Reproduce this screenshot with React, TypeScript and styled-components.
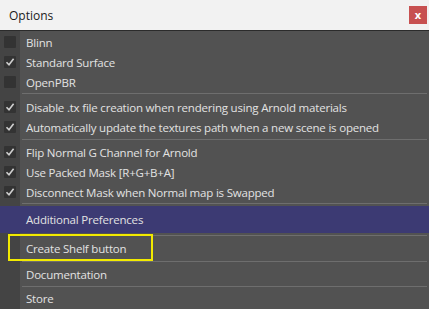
import React from "react";
import styled, { createGlobalStyle } from "styled-components";

const Global = createGlobalStyle`
  html, body { margin: 0; padding: 0; background: #f0f0f0; }
  body { font-family: "Open Sans", "Noto Sans", sans-serif; }
`;

const Window = styled.div`
  width: 429px;
  height: 309px;
  display: flex;
  flex-direction: column;
  position: relative;
  overflow: hidden;
`;

const TitleBar = styled.div`
  height: 30px;
  flex: none;
  background: #f2f2f2;
  display: flex;
  align-items: center;
  justify-content: space-between;
  padding: 0 2px 0 9px;
  box-sizing: border-box;
`;

const Title = styled.span`
  font-size: 12px;
  color: #1b1b1b;
`;

const Close = styled.div`
  width: 18px;
  height: 18px;
  background: #c75050;
  color: #fff;
  font-size: 11px;
  font-weight: 700;
  display: flex;
  align-items: center;
  justify-content: center;
  line-height: 1;
  padding-bottom: 2px;
  box-sizing: border-box;
`;

const Body = styled.div`
  flex: 1;
  border-top: 1px solid #2b2b2b;
  padding-top: 1px;
  background: linear-gradient(to right, #444444 0 20px, #525252 20px);
  display: flex;
  flex-direction: column;
  font-size: 11.5px;
  letter-spacing: -0.2px;
  color: #e2e2e2;
`;

const Row = styled.div<{ $h?: number; $hl?: boolean }>`
  height: ${(p) => p.$h ?? 20}px;
  flex: none;
  display: flex;
  align-items: center;
  background: ${(p) => (p.$hl ? "#3c3a73" : "transparent")};
`;

const Gutter = styled.div`
  width: 20px;
  flex: none;
  display: flex;
  align-items: center;
  justify-content: center;
`;

const Box = styled.div`
  width: 12px;
  height: 12px;
  background: #333333;
  border-radius: 1px;
  display: flex;
  align-items: center;
  justify-content: center;
`;

const Label = styled.span`
  padding-left: 6px;
  white-space: nowrap;
`;

const Sep = styled.div<{ $h: number; $top: number }>`
  height: ${(p) => p.$h}px;
  flex: none;
  position: relative;
  margin-left: 22px;
  margin-right: 2px;
  &::after {
    content: "";
    position: absolute;
    left: 0;
    right: 0;
    top: ${(p) => p.$top}px;
    height: 1px;
    background: #6e6e6e;
  }
`;

const Highlight = styled.div`
  position: absolute;
  left: 8px;
  top: 234px;
  width: 145px;
  height: 27px;
  border: 2px solid #f2ea00;
  box-sizing: border-box;
`;

const Check = () => (
  <svg width="10" height="10" viewBox="0 0 10 10">
    <polyline points="1.5,5.2 4,7.8 8.6,1.8" fill="none" stroke="#cfcfcf" strokeWidth="1.6" />
  </svg>
);

const CheckItem = ({ label, checked }: { label: string; checked: boolean }) => (
  <Row>
    <Gutter>
      <Box>{checked && <Check />}</Box>
    </Gutter>
    <Label>{label}</Label>
  </Row>
);

const MenuItem = ({ label, h, hl }: { label: string; h: number; hl?: boolean }) => (
  <Row $h={h} $hl={hl}>
    <Gutter />
    <Label>{label}</Label>
  </Row>
);

export default function App() {
  return (
    <Window>
      <Global />
      <TitleBar>
        <Title>Options</Title>
        <Close>x</Close>
      </TitleBar>
      <Body>
        <CheckItem label="Blinn" checked={false} />
        <CheckItem label="Standard Surface" checked />
        <CheckItem label="OpenPBR" checked={false} />
        <Sep $h={5} $top={1} />
        <CheckItem label="Disable .tx file creation when rendering using Arnold materials" checked />
        <CheckItem label="Automatically update the textures path when a new scene is opened" checked />
        <Sep $h={5} $top={2} />
        <CheckItem label="Flip Normal G Channel for Arnold" checked />
        <CheckItem label="Use Packed Mask [R+G+B+A]" checked />
        <CheckItem label="Disconnect Mask when Normal map is Swapped" checked />
        <Sep $h={4} $top={1} />
        <MenuItem label="Additional Preferences" h={27} hl />
        <Sep $h={3} $top={2} />
        <MenuItem label="Create Shelf button" h={25} />
        <Sep $h={1} $top={0} />
        <MenuItem label="Documentation" h={24} />
        <Sep $h={1} $top={0} />
        <MenuItem label="Store" h={22} />
      </Body>
      <Highlight />
    </Window>
  );
}
